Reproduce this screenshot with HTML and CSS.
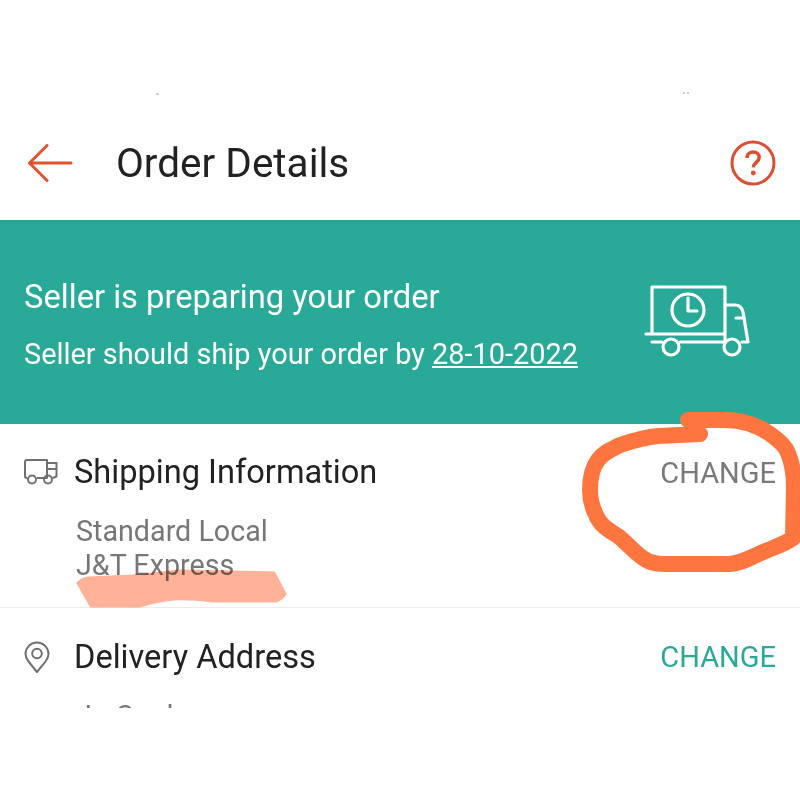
FILE: index.html
```html
<!DOCTYPE html>
<html lang="en">

<head>
  <meta charset="UTF-8">
  <title>Order Details</title>
  <link rel="stylesheet" href="styles.css">
</head>

<body>
  <div class="page">
    <header class="topbar">
      <svg class="back-icon" width="46" height="38" viewBox="0 0 46 38">
        <path d="M43 19H1.500M19 1.500 1.500 19 19 36.500" />
      </svg>
      <h1>Order Details</h1>
      <svg class="help-icon" width="46" height="46" viewBox="0 0 46 46">
        <circle cx="23" cy="23" r="21" />
        <path d="M17 18c0-4 2.800-6 6.200-6 3.500 0 6 2.200 6 5.400 0 4.600-5.600 4.800-5.900 10" />
        <circle class="dot" cx="23.300" cy="33" r="2.400" />
      </svg>
    </header>

    <section class="banner">
      <div class="banner-text">
        <p class="banner-title">Seller is preparing your order</p>
        <p class="banner-sub">Seller should ship your order by <u>28-10-2022</u></p>
      </div>
      <svg class="banner-truck" width="106" height="74" viewBox="0 0 106 74">
        <path d="M8 50V3h73v55M2 50h79M8 58h10M36 58h43M81 21h10c4 0 7 3 8 7l5 30h-6" />
        <path d="M92 34h8" />
        <circle cx="44" cy="26" r="16" />
        <path d="M44 14v13h9" />
        <circle cx="27" cy="63" r="8" />
        <circle cx="88" cy="63" r="8" />
      </svg>
    </section>

    <section class="info-row">
      <div class="info-head">
        <svg class="row-icon" width="34" height="26" viewBox="0 0 34 26">
          <path d="M3.500 19H3a2 2 0 0 1-2-2V3a2 2 0 0 1 2-2h20v18H13M23 4h9.500v13.500l-4 1.500M23 10h9.500" />
          <circle cx="8" cy="20.500" r="4" />
          <circle cx="24" cy="20.500" r="4" />
        </svg>
        <h2>Shipping Information</h2>
        <span class="change muted">CHANGE</span>
      </div>
      <p class="info-text">Standard Local<br>J&amp;T Express</p>
    </section>

    <section class="info-row address">
      <div class="info-head">
        <svg class="row-icon" width="34" height="32" viewBox="0 0 34 32" preserveAspectRatio="xMinYMid">
          <path d="M13 31 4.500 20.500C2.500 18 1.500 15.500 1.500 13a11.500 11.500 0 0 1 23 0c0 2.500-1 5-3 7.500Z" />
          <circle cx="13" cy="12.500" r="4.800" />
        </svg>
        <h2>Delivery Address</h2>
        <span class="change">CHANGE</span>
      </div>
      <p class="info-text">Jo Cook</p>
    </section>

    <!-- marker scribbles drawn over the screenshot -->
    <svg class="scribbles" width="800" height="800" viewBox="0 0 800 800">
      <path class="speck" d="M156 94h3M683 93h2M687 93h2" />
      <path class="smear" d="M78 583Q82 579 88 578L133 576 180 571 274 573 285 594Q282 599 276 601L213 601Q190 598 173 599 155 601 140 606L91 606Z" />
      <path class="ring" d="M688 420L725 420C745 420 760 427 770 434 780 441 786 447 788 453 793 465 794 475 794 487L793 538C785 544 775 547 763 552 750 558 742 563 730 564L680 564C662 564 652 565 643 558 633 551 628 544 618 536 608 530 600 525 596 515 592 507 590 500 590 490 590 478 592 468 598 460 604 452 612 449 620 445 632 441 645 437 658 436L700 434" />
    </svg>
  </div>
</body>

</html>
```

FILE: styles.css
```css
* {
  box-sizing: border-box;
}

body {
  margin: 0;
  background: #fff;
  font-family: Roboto, "Liberation Sans", sans-serif;
}

.page {
  position: relative;
  width: 800px;
  height: 800px;
  padding-top: 96px;
  overflow: hidden;
}

.topbar {
  display: flex;
  align-items: center;
  height: 124px;
  padding: 10px 24px 0 28px;
}

.topbar h1 {
  flex: 1;
  margin: 0 0 0 42px;
  font-size: 40.500px;
  font-weight: 400;
  color: #222;
}

.back-icon path {
  fill: none;
  stroke: #e4532f;
  stroke-width: 3;
  stroke-linecap: round;
  stroke-linejoin: round;
}

.help-icon circle,
.help-icon path {
  fill: none;
  stroke: #dd4f33;
  stroke-width: 3;
}

.help-icon path {
  stroke-width: 3.500;
}

.help-icon .dot {
  fill: #dd4f33;
  stroke: none;
}

.banner {
  display: flex;
  align-items: center;
  justify-content: space-between;
  height: 204px;
  padding: 0 50px 0 24px;
  background: #29a997;
  box-shadow: inset 0 5px 4px -3px rgba(0, 0, 0, 0.07);
  color: #fff;
}

.banner-text {
  padding-top: 5px;
}

.banner-text p {
  margin: 0;
}

.banner-title {
  font-size: 32.700px;
  margin-bottom: 21px !important;
}

.banner-sub {
  font-size: 28.900px;
}

.banner-truck {
  margin-top: -2px;
  fill: none;
  stroke: #fff;
  stroke-width: 3.200;
  stroke-linecap: round;
  stroke-linejoin: round;
}

.info-row {
  height: 184px;
  padding: 26px 24px 0;
  border-bottom: 1px solid #ececec;
}

.info-row.address {
  height: 100px;
  padding-top: 27px;
  overflow: hidden;
  border-bottom: none;
}

.info-head {
  display: flex;
  align-items: center;
  height: 44px;
}

.info-head h2 {
  flex: 1;
  margin: 0;
  font-size: 32.600px;
  font-weight: 400;
  color: #222;
}

.row-icon {
  width: 34px;
  margin-right: 16px;
  fill: none;
  stroke: #707070;
  stroke-width: 2;
  stroke-linejoin: round;
}

.change {
  font-size: 29px;
  color: #29a997;
}

.change.muted {
  padding-top: 2px;
  color: #7a7a7a;
}

.info-text {
  margin: 20px 0 0 52px;
  font-size: 28.700px;
  line-height: 34px;
  color: #777;
}

.scribbles {
  position: absolute;
  top: 0;
  left: 0;
}

.speck {
  fill: none;
  stroke: #999;
  stroke-width: 1;
}

.smear {
  fill: #ffb199;
  stroke: #ffb199;
  stroke-width: 3;
  stroke-linejoin: round;
  mix-blend-mode: multiply;
}

.ring {
  fill: none;
  stroke: #ff7540;
  stroke-width: 16;
  stroke-linecap: round;
  stroke-linejoin: round;
}
```
